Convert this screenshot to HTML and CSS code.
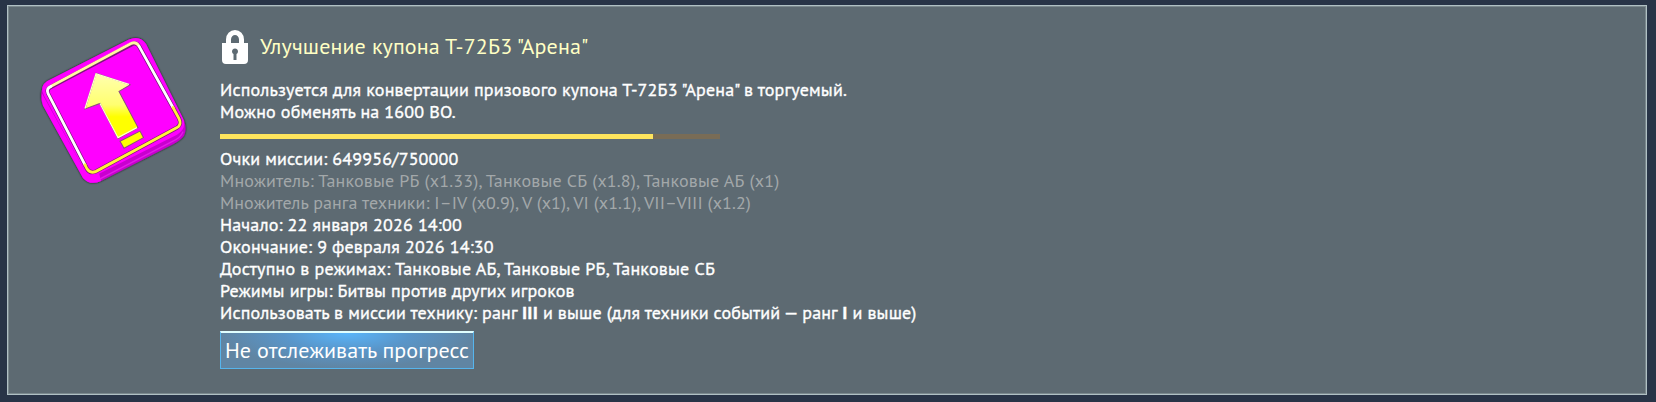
FILE: index.html
```html
<!DOCTYPE html>
<html lang="ru">
<head>
<meta charset="utf-8">
<title>Улучшение купона</title>
<link rel="stylesheet" href="styles.css">
</head>
<body>
<main class="panel">
  <svg class="coupon" viewBox="0 0 170 170" preserveAspectRatio="none" aria-hidden="true">
    <defs>
      <linearGradient id="arrow" x1="0" y1="0" x2="0" y2="1">
        <stop offset="0" stop-color="#ffffb0"/><stop offset=".42" stop-color="#ffff70"/>
        <stop offset=".58" stop-color="#ffff00"/><stop offset="1" stop-color="#ffff00"/>
      </linearGradient>
      <filter id="glow" x="-10%" y="-10%" width="120%" height="120%">
        <feDropShadow dx="0" dy="0" stdDeviation="1.2" flood-color="#000" flood-opacity=".9"/>
      </filter>
    </defs>
    <path filter="url(#glow)" fill="#c800cf" d="M17 56 99 14.500Q110 10 116 19L154 95Q157 104 154 110Q151 114 144 118L71 155Q60 160 53 152L13 80Q10 72 12 64Q13 59 17 56Z"/>
    <path fill="#f0f" d="M12 68 53 142Q59 150 69 147L71 155Q60 160 53 152L13 80Q11 74 12 68Z"/>
    <path fill="none" stroke="#e31ce8" stroke-width="1.500" d="M70 153 142 116Q151 112 153 106"/>
    <path fill="#f0f" d="M17 56 99 14.500Q110 10 116 19L153 93Q157 103 147 109L69 148Q60 152 54 144L14 70Q9 61 17 56Z"/>
    <path fill="none" stroke="#7b177b" stroke-width="4.200" d="M21 61.500 101 19.500Q106 16.500 109 21L149 93Q152 99 147 102L66 145.500Q60 148 57 143L18 68Q16 64 21 61.500Z"/>
    <g fill="none" stroke-width="2.800" stroke-linecap="round">
      <path stroke="#fff9a0" d="M21 61 101 18.500Q106 16 109 21"/>
      <path stroke="#fff" d="M109 21 143 82M21 61Q16 63 18 68L55 139"/>
      <path stroke="#fff13a" d="M143 82 149 93Q152 99 147 102L66 145.500Q60 148 57 143L55 139"/>
    </g>
    <path fill="url(#arrow)" stroke="#87517d" stroke-width="1" d="M66 48 100 59.500 89 66 108 102 88 113 70 78 55 83.500ZM90 115.500 110 105.500 113.500 112 94 122.500Z"/>
    <path fill="none" stroke="#ffffd0" stroke-width="1.200" d="M55 83 66 48.500 99 59M70 78 88 112 107 102"/>
  </svg>
  <section class="content">
    <header class="heading">
      <svg class="lock" viewBox="0 0 26 35" aria-hidden="true">
        <path fill="none" stroke="#fff" stroke-width="5" d="M6.500 14V9.500a6.500 7 0 0 1 13 0V14"/>
        <path fill="#fff" fill-rule="evenodd" d="M0 13h26v17q0 4-4 4H4q-4 0-4-4ZM11.500 24v6h3v-6a3 3 0 1 0-3 0Z"/>
      </svg>
      <h1 class="title">Улучшение купона Т-72Б3 "Арена"</h1>
    </header>
    <div class="lines">
      <p class="line">Используется для конвертации призового купона Т-72Б3 "Арена" в торгуемый.</p>
      <p class="line">Можно обменять на 1600 ВО.</p>
    </div>
    <div class="progress"><div class="progress-fill"></div></div>
    <div class="lines">
      <p class="line">Очки миссии: 649956/750000</p>
      <p class="line muted">Множитель: Танковые РБ (x1.33), Танковые СБ (x1.8), Танковые АБ (x1)</p>
      <p class="line muted rank">Множитель ранга техники: I–IV (x0.9), V (x1), VI (x1.1), VII–VIII (x1.2)</p>
      <p class="line">Начало: 22 января 2026 14:00</p>
      <p class="line">Окончание: 9 февраля 2026 14:30</p>
      <p class="line modes">Доступно в режимах: Танковые АБ, Танковые РБ, Танковые СБ</p>
      <p class="line">Режимы игры: Битвы против других игроков</p>
      <p class="line usage">Использовать в миссии технику: ранг <b>III</b> и выше (для техники событий — ранг <b>I</b> и выше)</p>
    </div>
    <button class="track"><span class="track-label">Не отслеживать прогресс</span></button>
  </section>
</main>
</body>
</html>
```
FILE: styles.css
```css
* { box-sizing: border-box; }
body {
  margin: 0;
  height: 402px;
  padding: 5px 9px 7px 7px;
  background: #283447;
  font-family: "PT Sans", "Noto Sans", sans-serif;
  color: #fff;
  overflow: hidden;
}
.panel {
  height: 390px;
  display: flex;
  gap: 20px;
  padding: 18px 0 0 22px;
  background: #5d6a72;
  border: 1px solid #b0c0c4;
  box-shadow: inset 0 0 0 1px #7b898e;
}
.coupon { width: 170px; height: 171px; margin-top: 1px; flex: none; }
.content { display: flex; flex-direction: column; align-items: flex-start; padding-top: 6px; }
.heading { display: flex; gap: 12px; height: 49px; padding-left: 2px; }
.lock { width: 26px; height: 35px; flex: none; }
.title {
  margin: 0;
  font-size: 22px;
  font-weight: 400;
  line-height: 32px;
  letter-spacing: .13px;
  color: #ffffc4;
  white-space: nowrap;
}
.line {
  margin: 0;
  height: 22px;
  font-size: 18px;
  line-height: 22px;
  letter-spacing: .17px;
  white-space: nowrap;
  -webkit-text-stroke: .35px currentColor;
}
.muted { color: #a3a8aa; -webkit-text-stroke: 0; }
.rank { letter-spacing: .08px; }
.modes { letter-spacing: .21px; }
.usage { letter-spacing: .15px; }
.progress { width: 500px; height: 5px; margin: 11px 0 9px; background: #796c56; }
.progress-fill { width: 433px; height: 5px; background: #ffe55d; }
.track {
  width: 254px;
  height: 38px;
  margin-top: 7px;
  padding: 0 0 0 4px;
  text-align: left;
  font: inherit;
  color: #fff;
  border: 1px solid #56b5ed;
  border-top: 2px solid #e0ffff;
  background: radial-gradient(ellipse 50% 100% at 50% 0, #59b5fa, #5996ca 50%, transparent), #6085a3;
}
.track-label { display: block; font-size: 22px; line-height: 33px; letter-spacing: .09px; white-space: nowrap; }
```
